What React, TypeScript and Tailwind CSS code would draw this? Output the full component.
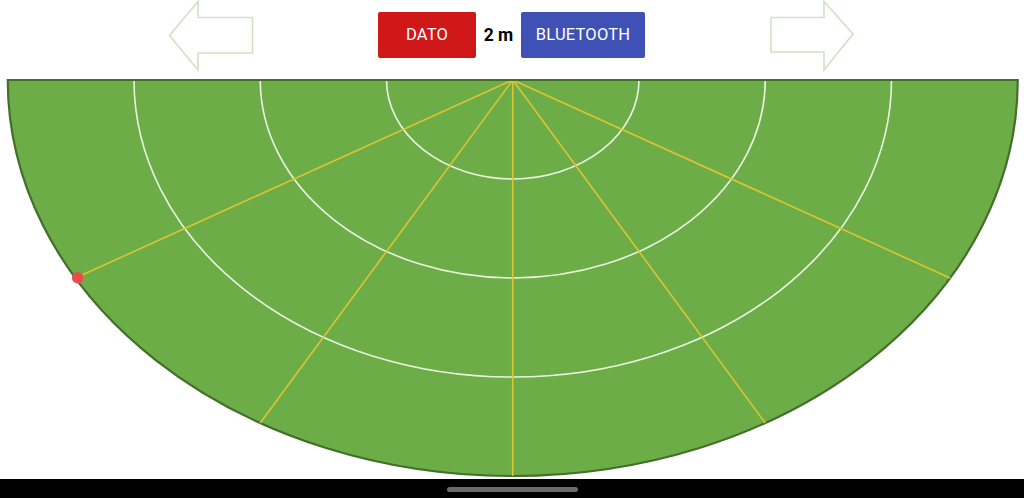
import React from "react";

const CX = 512.75;
const CY = 8;
const RX = 505;
const RY = 396;

function halfEllipse(rx: number, ry: number) {
  return `M ${CX - rx} ${CY} A ${rx} ${ry} 0 0 0 ${CX + rx} ${CY}`;
}

export default function App() {
  const rings = [0.25, 0.5, 0.75];
  const rays = [30, 60, 90, 120, 150];
  return (
    <div className="w-[1024px] h-[498px] bg-white flex flex-col overflow-hidden" style={{ fontFamily: "Roboto, 'Liberation Sans', sans-serif" }}>
      <div className="h-[72px] flex items-start pl-[168px] shrink-0">
        <svg width="86" height="72" viewBox="0 0 86 72" className="shrink-0">
          <path d="M1.5 35.5 L30 1.5 L30 17.5 L84.5 17.5 L84.5 53 L30 53 L30 70 Z" fill="none" stroke="#cfe2c2" strokeWidth="1.6" strokeLinejoin="miter" />
        </svg>
        <div className="ml-[124px] mt-[12px] flex items-center">
          <button className="w-[98px] h-[46px] rounded-[2px] bg-[#d01818] text-white text-[16.5px] tracking-[0.2px] flex items-center justify-center">DATO</button>
          <span className="w-[45px] text-center text-black font-bold text-[17.5px]">2 m</span>
          <button className="w-[124px] h-[46px] rounded-[2px] bg-[#3f51b5] text-white text-[16.5px] tracking-[0.2px] flex items-center justify-center">BLUETOOTH</button>
        </div>
        <svg width="86" height="72" viewBox="0 0 86 72" className="ml-[125px] shrink-0">
          <path d="M1 17.5 L54 17.5 L54 1.5 L83 34 L54 70 L54 52 L1 52 Z" fill="none" stroke="#cfe2c2" strokeWidth="1.6" strokeLinejoin="miter" />
        </svg>
      </div>
      <svg width="1024" height="407" viewBox="0 0 1024 407" className="shrink-0 block">
        <path d={halfEllipse(RX, RY) + " Z"} fill="#6cad47" stroke="#436f2b" strokeWidth="2.2" />
        {rings.map((f) => (
          <path key={f} d={halfEllipse(RX * f, RY * f)} fill="none" stroke="#eaf4e2" strokeWidth="1.6" />
        ))}
        {rays.map((a) => {
          const t = (a * Math.PI) / 180;
          return (
            <line key={a} x1={CX} y1={CY} x2={CX + RX * Math.cos(t)} y2={CY + RY * Math.sin(t)} stroke="#dcc432" strokeWidth="1.6" />
          );
        })}
        <path d={`M ${CX - RX} ${CY} L ${CX + RX} ${CY}`} stroke="#436f2b" strokeWidth="2.2" />
        <circle cx="77.7" cy="205.7" r="5.8" fill="#ec4b4b" />
      </svg>
      <div className="flex-1 bg-black flex justify-center pt-[8px]">
        <div className="w-[131px] h-[5px] rounded-full bg-[#6b6b6b]" />
      </div>
    </div>
  );
}
